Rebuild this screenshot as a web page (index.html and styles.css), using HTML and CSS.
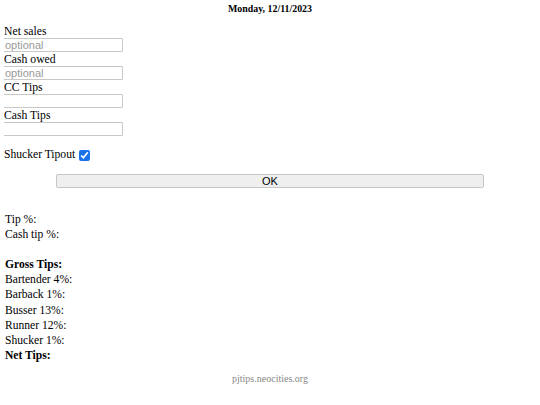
FILE: index.html
```html
<!DOCTYPE html>
<html lang="en">
<head>
    <meta charset="UTF-8">
    <meta name="viewport" content="width=device-width, initial-scale=1.0">
    <title>PJ Tips</title>
    <link rel="stylesheet" href="styles.css">
</head>
<body>
    <h1 class="date">Monday, 12/11/2023</h1>

    <form class="tip-form" onsubmit="return false;">
        <label for="net-sales">Net sales</label>
        <input type="text" id="net-sales" placeholder="optional">
        <label for="cash-owed">Cash owed</label>
        <input type="text" id="cash-owed" placeholder="optional">
        <label for="cc-tips">CC Tips</label>
        <input type="text" id="cc-tips">
        <label for="cash-tips">Cash Tips</label>
        <input type="text" id="cash-tips">

        <div class="shucker">
            Shucker Tipout <input type="checkbox" id="shucker" checked>
        </div>

        <button class="ok-btn" type="button">OK</button>
    </form>

    <div class="results">
        <div>Tip %:</div>
        <div>Cash tip %:</div>
        <div class="spacer"></div>
        <div class="strong">Gross Tips:</div>
        <div>Bartender 4%:</div>
        <div>Barback 1%:</div>
        <div>Busser 13%:</div>
        <div>Runner 12%:</div>
        <div>Shucker 1%:</div>
        <div class="strong">Net Tips:</div>
    </div>

    <div class="footer">pjtips.neocities.org</div>
</body>
</html>
```

FILE: styles.css
```css
body {
    font-family: 'Liberation Serif', 'Times New Roman', serif;
    color: #000;
    background: #fff;
    margin: 0 4px;
}

.date {
    font-size: 9.9px;
    line-height: 12px;
    text-align: center;
    margin: 3px 0 0;
}

.tip-form {
    margin-top: 9px;
}

.tip-form label {
    display: block;
    font-size: 11.7px;
    line-height: 14px;
    padding-top: 1px;
    margin-bottom: -1px;
}

.tip-form input[type="text"] {
    display: block;
    box-sizing: border-box;
    width: 120px;
    height: 14px;
    margin: 0 0 0 -1px;
    padding: 0 1px;
    border: 1px solid #c8c8c8;
    border-radius: 1px;
    font-family: 'Liberation Sans', Arial, sans-serif;
    font-size: 11px;
}

.tip-form input::placeholder {
    color: #9a9a9a;
}

.shucker {
    margin-top: 12px;
    font-size: 11.6px;
    line-height: 14px;
    display: flex;
    align-items: center;
    gap: 4px;
}

.shucker input {
    width: 11px;
    height: 11px;
    margin: 0;
    accent-color: #1a73e8;
}

.ok-btn {
    display: block;
    box-sizing: border-box;
    width: 428px;
    height: 14px;
    margin: 12px auto 0;
    padding: 0;
    border: 1px solid #c6c6c6;
    border-radius: 2px;
    background: #efefef;
    font-family: 'Liberation Sans', Arial, sans-serif;
    font-size: 11px;
    line-height: 12px;
    color: #000;
}

.results {
    margin-top: 24px;
    padding-left: 1px;
    font-size: 11.6px;
    line-height: 15.1px;
}

.results .spacer {
    height: 15.1px;
}

.results .strong {
    font-weight: bold;
}

.footer {
    margin-top: 10px;
    text-align: center;
    font-size: 10px;
    line-height: 12px;
    color: #888;
}
```
